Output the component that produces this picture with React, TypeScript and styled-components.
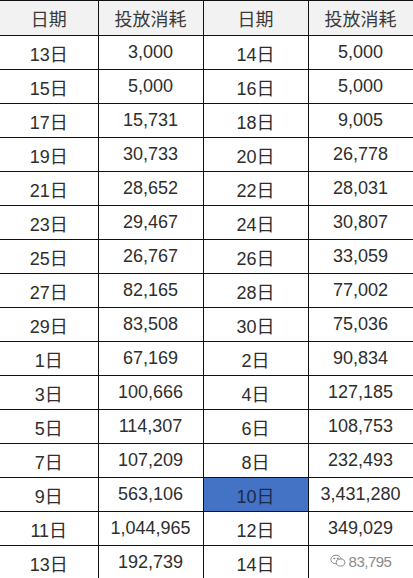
import React from "react";
import styled, { createGlobalStyle } from "styled-components";

const Global = createGlobalStyle`
  html, body { margin: 0; padding: 0; background: #ffffff; }
  body { font-family: "Liberation Sans", "Noto Sans CJK SC", sans-serif; }
`;

const Table = styled.table`
  border-collapse: collapse;
  width: 413px;
  table-layout: fixed;
  font-family: "Liberation Sans", "Noto Sans CJK SC", sans-serif;
  font-size: 18px;
  color: #2e2e2e;
`;

const Col = styled.col<{ $w: number }>`
  width: ${(p) => p.$w}px;
`;

const HeadCell = styled.th`
  border: 1px solid #111;
  height: 34px;
  padding: 0;
  text-align: center;
  vertical-align: middle;
  font-weight: 400;
  background: #f2f2f2;
  color: #3a3a3a;
  &:first-child { border-left: none; }
`;

const Cell = styled.td<{ $hl?: boolean }>`
  border: 1px solid #111;
  height: 33px;
  padding: 0;
  text-align: center;
  vertical-align: middle;
  background: ${(p) => (p.$hl ? "#4472c4" : "#ffffff")};
  color: ${(p) => (p.$hl ? "#1d2a4a" : "#2e2e2e")};
  &:first-child { border-left: none; }
`;

const Watermark = styled.span`
  display: inline-flex;
  align-items: center;
  gap: 3px;
  color: #8a8a8a;
  font-size: 15px;
  letter-spacing: -0.5px;
`;

const rows: [string, string, string, string][] = [
  ["13日", "3,000", "14日", "5,000"],
  ["15日", "5,000", "16日", "5,000"],
  ["17日", "15,731", "18日", "9,005"],
  ["19日", "30,733", "20日", "26,778"],
  ["21日", "28,652", "22日", "28,031"],
  ["23日", "29,467", "24日", "30,807"],
  ["25日", "26,767", "26日", "33,059"],
  ["27日", "82,165", "28日", "77,002"],
  ["29日", "83,508", "30日", "75,036"],
  ["1日", "67,169", "2日", "90,834"],
  ["3日", "100,666", "4日", "127,185"],
  ["5日", "114,307", "6日", "108,753"],
  ["7日", "107,209", "8日", "232,493"],
  ["9日", "563,106", "10日", "3,431,280"],
  ["11日", "1,044,965", "12日", "349,029"],
  ["13日", "192,739", "14日", ""],
];

const WeIcon = () => (
  <svg width="16" height="14" viewBox="0 0 16 14" fill="none" stroke="#8a8a8a" strokeWidth="1">
    <ellipse cx="6" cy="5.5" rx="5.2" ry="4.3" />
    <ellipse cx="10.5" cy="8.5" rx="4.3" ry="3.5" fill="#fff" />
    <circle cx="4.2" cy="4.5" r="0.6" fill="#8a8a8a" />
    <circle cx="7.8" cy="4.5" r="0.6" fill="#8a8a8a" />
  </svg>
);

export default function App() {
  return (
    <>
      <Global />
      <Table>
        <colgroup>
          <Col $w={98} />
          <Col $w={105} />
          <Col $w={105} />
          <Col $w={105} />
        </colgroup>
        <thead>
          <tr>
            <HeadCell>日期</HeadCell>
            <HeadCell>投放消耗</HeadCell>
            <HeadCell>日期</HeadCell>
            <HeadCell>投放消耗</HeadCell>
          </tr>
        </thead>
        <tbody>
          {rows.map((r, i) => (
            <tr key={i}>
              <Cell>{r[0]}</Cell>
              <Cell>{r[1]}</Cell>
              <Cell $hl={r[2] === "10日"}>{r[2]}</Cell>
              <Cell>
                {r[3] || (
                  <Watermark>
                    <WeIcon />
                    83,795
                  </Watermark>
                )}
              </Cell>
            </tr>
          ))}
        </tbody>
      </Table>
    </>
  );
}
